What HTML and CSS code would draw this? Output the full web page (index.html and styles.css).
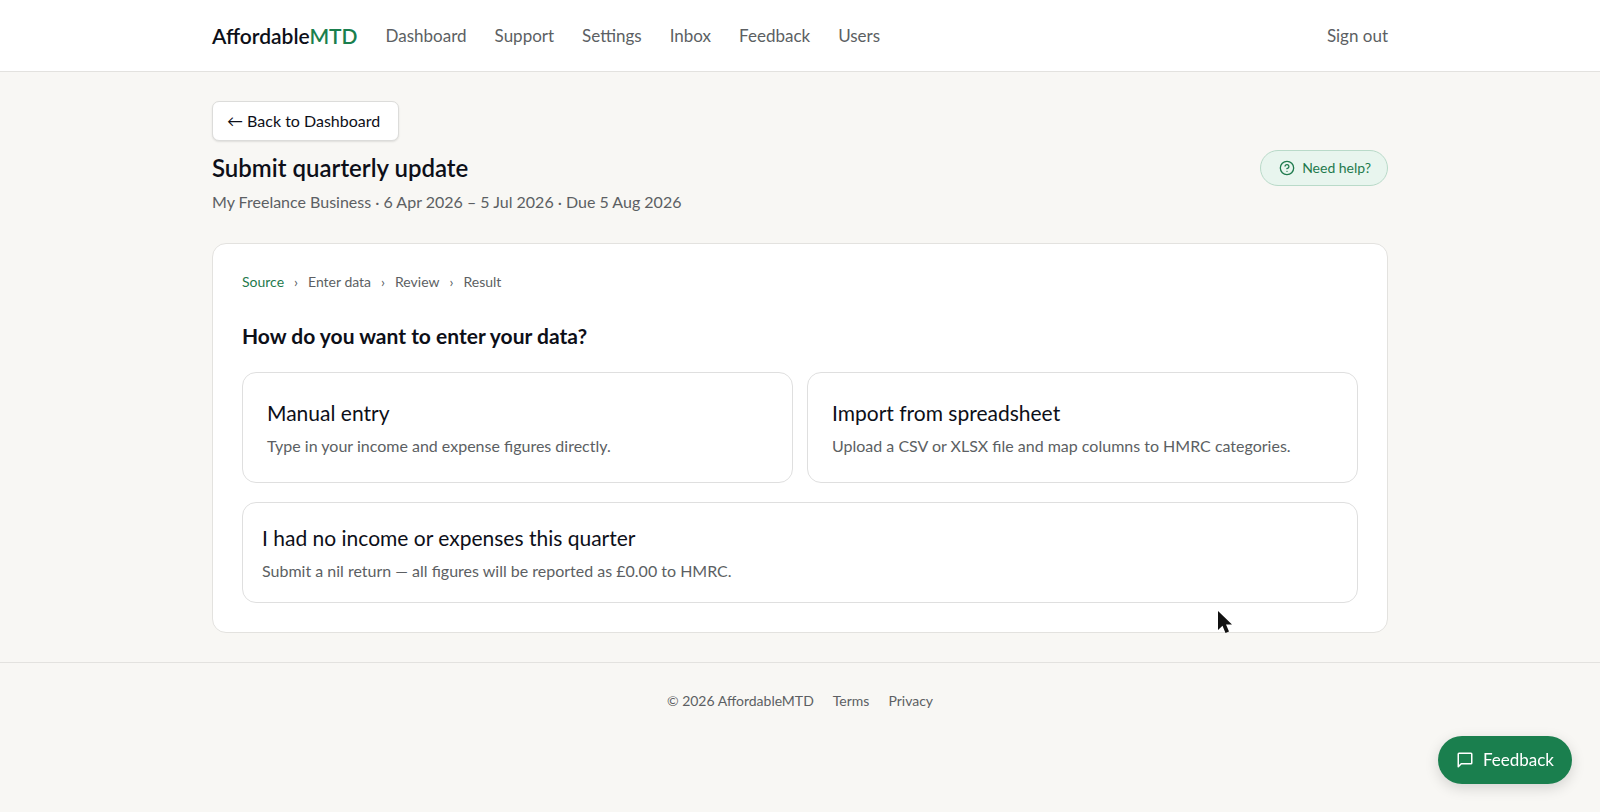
FILE: index.html
```html
<!DOCTYPE html>
<html lang="en">
<head>
  <meta charset="UTF-8">
  <meta name="viewport" content="width=device-width, initial-scale=1.0">
  <title>Submit quarterly update - AffordableMTD</title>
  <link rel="stylesheet" href="styles.css">
</head>
<body>
  <header class="site-header">
    <div class="container header-inner">
      <a href="#" class="logo">Affordable<span>MTD</span></a>
      <nav class="main-nav">
        <a href="#">Dashboard</a>
        <a href="#">Support</a>
        <a href="#">Settings</a>
        <a href="#">Inbox</a>
        <a href="#">Feedback</a>
        <a href="#">Users</a>
      </nav>
      <button type="button" class="sign-out">Sign out</button>
    </div>
  </header>

  <main class="container page">
    <a href="#" class="back-link">← Back to Dashboard</a>
    <div class="title-row">
      <h1>Submit quarterly update</h1>
      <button type="button" class="help-button">
        <svg width="16" height="16" viewBox="0 0 24 24" fill="none" stroke="currentColor" stroke-width="2" stroke-linecap="round" stroke-linejoin="round" aria-hidden="true">
          <circle cx="12" cy="12" r="10"/>
          <path d="M9.09 9a3 3 0 0 1 5.83 1c0 2-3 3-3 3"/>
          <path d="M12 17h.01"/>
        </svg>
        Need help?
      </button>
    </div>
    <p class="subtitle">My Freelance Business · 6 Apr 2026 – 5 Jul 2026 · Due 5 Aug 2026</p>

    <section class="card">
      <ol class="steps">
        <li class="active">Source</li>
        <li>Enter data</li>
        <li>Review</li>
        <li>Result</li>
      </ol>
      <h2>How do you want to enter your data?</h2>
      <div class="options">
        <button type="button" class="option">
          <span class="option-title">Manual entry</span>
          <span class="option-text">Type in your income and expense figures directly.</span>
        </button>
        <button type="button" class="option">
          <span class="option-title">Import from spreadsheet</span>
          <span class="option-text">Upload a CSV or XLSX file and map columns to HMRC categories.</span>
        </button>
      </div>
      <button type="button" class="option option-nil">
        <span class="option-title">I had no income or expenses this quarter</span>
        <span class="option-text">Submit a nil return — all figures will be reported as £0.00 to HMRC.</span>
      </button>
    </section>
  </main>

  <footer class="site-footer">
    <span>© 2026 AffordableMTD</span>
    <a href="#">Terms</a>
    <a href="#">Privacy</a>
  </footer>

  <button type="button" class="feedback-button">
    <svg width="18" height="18" viewBox="0 0 24 24" fill="none" stroke="currentColor" stroke-width="2" stroke-linecap="round" stroke-linejoin="round" aria-hidden="true">
      <path d="M21 16a1 1 0 0 1-1 1H7l-4 4V4a1 1 0 0 1 1-1h16a1 1 0 0 1 1 1z"/>
    </svg>
    Feedback
  </button>

  <svg class="cursor" width="16" height="24" viewBox="0 0 16 24" aria-hidden="true">
    <path d="M1 1v19l4.500-4.200L8.500 23l3.500-1.500-3-7h6z" fill="#111"/>
  </svg>
</body>
</html>
```
FILE: styles.css
```css
* {
  box-sizing: border-box;
}
body {
  margin: 0;
  font-family: Lato, "Liberation Sans", sans-serif;
  font-size: 17px;
  line-height: 24px;
  color: #0d0f18;
  background-color: #f8f7f4;
}
a {
  color: inherit;
  text-decoration: none;
}
button {
  font: inherit;
  color: inherit;
  cursor: pointer;
}
h1, h2, p {
  margin: 0;
}
.container {
  max-width: 1224px;
  margin: 0 auto;
  padding: 0 24px;
}

.site-header {
  background-color: #fff;
  border-bottom: 1px solid #e3e2df;
}
.header-inner {
  display: flex;
  align-items: center;
  gap: 28px;
  min-height: 71px;
}
.logo {
  font-size: 21px;
  font-weight: 600;
}
.logo span {
  color: #1a7f4e;
}
.main-nav {
  display: flex;
  gap: 28px;
  color: #5c5f63;
}
.sign-out {
  margin-left: auto;
  padding: 0;
  border: none;
  background: none;
  color: #5c5f63;
}

.page {
  padding-top: 29px;
  padding-bottom: 29px;
}
.back-link {
  display: inline-block;
  padding: 7px 18px 7px 14px;
  font-size: 16px;
  background-color: #fff;
  border: 1px solid #dcdcda;
  border-radius: 7px;
  box-shadow: 0 1px 2px rgba(0, 0, 0, 0.1);
}
.title-row {
  display: flex;
  justify-content: space-between;
  align-items: center;
  margin-top: 9px;
}
h1 {
  font-size: 24px;
  font-weight: 600;
  line-height: 32px;
}
.help-button {
  display: flex;
  align-items: center;
  gap: 7px;
  padding: 6px 16px 6px 18px;
  font-size: 14px;
  line-height: 22px;
  color: #1f7a4d;
  background-color: #e8f5ee;
  border: 1px solid #b9dac9;
  border-radius: 18px;
}
.subtitle {
  margin-top: 4px;
  font-size: 16px;
  color: #5c5f63;
}

.card {
  margin-top: 29px;
  padding: 28px 29px 29px;
  background-color: #fff;
  border: 1px solid #e3e2df;
  border-radius: 14px;
}
.steps {
  display: flex;
  margin: 0;
  padding: 0;
  list-style: none;
  font-size: 14px;
  line-height: 20px;
  color: #5c5f63;
}
.steps .active {
  color: #1f7a4d;
}
.steps li + li::before {
  content: "›";
  margin: 0 10px;
  color: #5c5f63;
}
h2 {
  margin: 29px 0 21px;
  font-size: 21px;
  line-height: 30px;
}
.options {
  display: grid;
  grid-template-columns: 1fr 1fr;
  gap: 14px;
}
.option {
  display: flex;
  flex-direction: column;
  gap: 5px;
  padding: 24px;
  text-align: left;
  background-color: #fff;
  border: 1px solid #dfdfdf;
  border-radius: 14px;
}
.option-nil {
  width: 100%;
  margin-top: 19px;
  padding: 19px;
}
.option-title {
  font-size: 21px;
  line-height: 32px;
}
.option-text {
  font-size: 16px;
  color: #5c5f63;
}

.site-footer {
  display: flex;
  justify-content: center;
  gap: 19px;
  padding: 27px 24px;
  font-size: 14px;
  line-height: 22px;
  color: #5c5f63;
  border-top: 1px solid #e3e2df;
}

.feedback-button {
  position: fixed;
  right: 28px;
  bottom: 28px;
  display: flex;
  align-items: center;
  gap: 9px;
  padding: 12px 18px;
  color: #fff;
  background-color: #1a7f4e;
  border: none;
  border-radius: 24px;
  box-shadow: 0 4px 14px rgba(0, 0, 0, 0.15);
}
.cursor {
  position: absolute;
  left: 1217px;
  top: 610px;
}
```
